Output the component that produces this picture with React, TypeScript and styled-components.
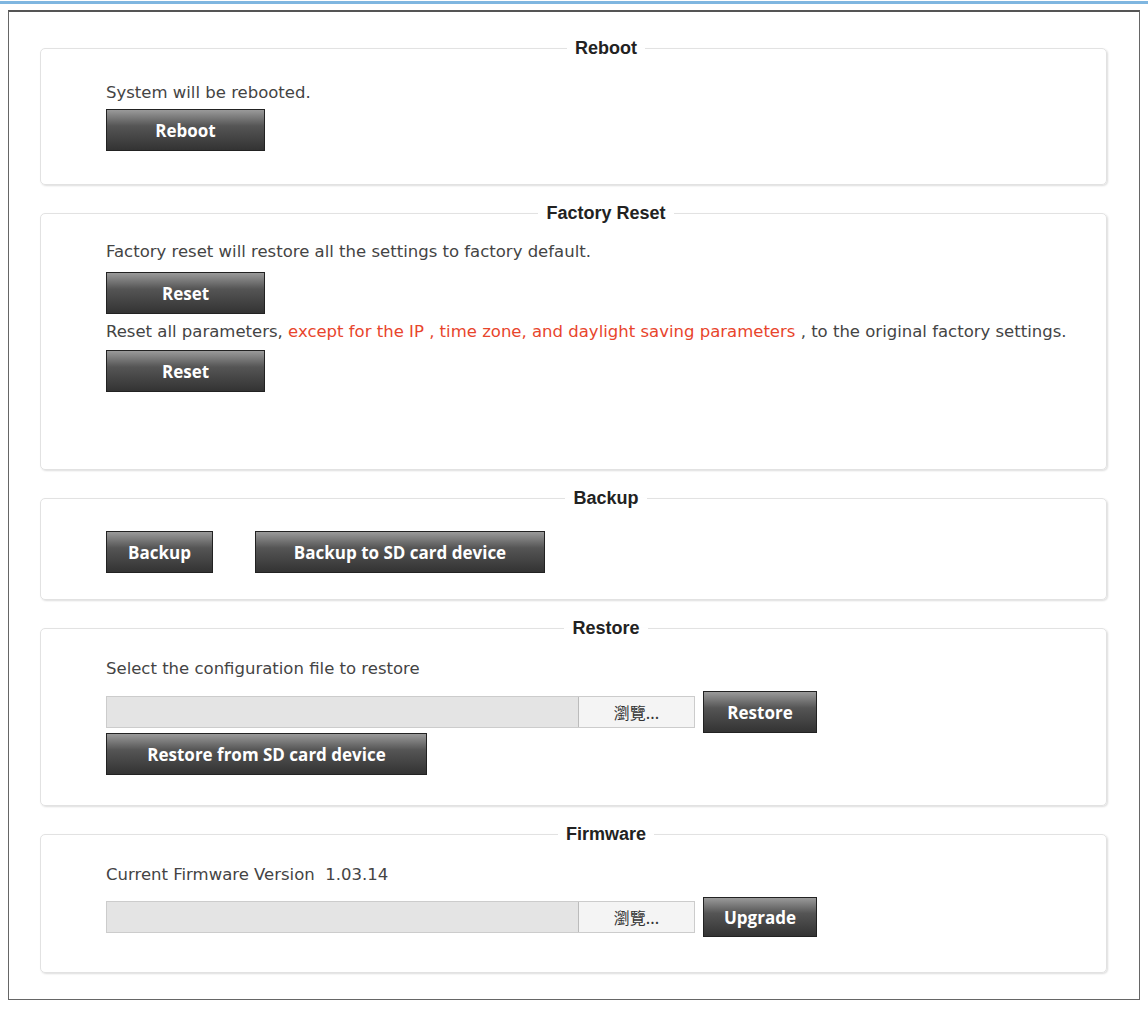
import React from 'react';
import styled, { createGlobalStyle } from 'styled-components';

const Global = createGlobalStyle`
  body { margin: 0; background: #fff; font-family: "Open Sans", "Noto Sans CJK TC", sans-serif; color: #333; }
`;

const TopLine = styled.div`
  height: 3px;
  margin-top: 1px;
  background: #7fb6e0;
`;

const Frame = styled.div`
  margin: 6px 8px 0 8px;
  height: 990px;
  box-sizing: border-box;
  border: 1px solid #666;
  border-top: 2px solid #555;
  padding: 26px 32px 0 31px;
  display: flex;
  flex-direction: column;
  gap: 18px;
`;

const Box = styled.fieldset<{ $h: number }>`
  margin: 0;
  height: ${p => p.$h}px;
  box-sizing: border-box;
  border: 1px solid #e2e2e2;
  border-radius: 5px;
  padding: 4px 0 0 65px;
  box-shadow: 1px 1px 2px #ddd;
`;

const Legend = styled.legend`
  margin: 0 auto;
  padding: 0 8px;
  font-weight: bold;
  font-size: 18px;
  color: #222;
  font-family: "Liberation Sans", sans-serif;
`;

const Text = styled.div`
  font-size: 16.5px;
  line-height: 24px;
  color: #444;
  font-family: "DejaVu Sans", sans-serif;
  padding-right: 10px;
`;

const Red = styled.span`
  color: #e8452c;
`;

const Btn = styled.button<{ $w: number }>`
  width: ${p => p.$w}px;
  height: 42px;
  border: 1px solid #222;
  background: linear-gradient(#9a9a9a, #555 40%, #333);
  color: #fff;
  font-family: "Open Sans", sans-serif;
  font-weight: bold;
  font-size: 17px;
  padding: 0;
  display: block;
`;

const Row = styled.div`
  display: flex;
  align-items: center;
  gap: 8px;
`;

const FileInput = styled.div`
  width: 589px;
  height: 32px;
  box-sizing: border-box;
  border: 1px solid #ccc;
  background: #e4e4e4;
  display: flex;
  justify-content: flex-end;
`;

const Browse = styled.div`
  width: 115px;
  border-left: 1px solid #bbb;
  background: #f4f4f4;
  font-size: 16px;
  font-family: "Noto Sans CJK TC", sans-serif;
  display: flex;
  align-items: center;
  justify-content: center;
  color: #333;
`;

export default function App() {
  return (
    <>
      <Global />
      <TopLine />
      <Frame>
        <Box $h={147}>
          <Legend>Reboot</Legend>
          <Text style={{ marginTop: 18 }}>System will be rebooted.</Text>
          <Btn $w={159} style={{ marginTop: 4 }}>Reboot</Btn>
        </Box>
        <Box $h={267}>
          <Legend>Factory Reset</Legend>
          <Text style={{ marginTop: 12 }}>Factory reset will restore all the settings to factory default.</Text>
          <Btn $w={159} style={{ marginTop: 8 }}>Reset</Btn>
          <Text style={{ marginTop: 6 }}>
            Reset all parameters, <Red>except for the IP , time zone, and daylight saving parameters</Red> , to the original factory settings.
          </Text>
          <Btn $w={159} style={{ marginTop: 6 }}>Reset</Btn>
        </Box>
        <Box $h={112}>
          <Legend>Backup</Legend>
          <Row style={{ gap: 42, marginTop: 18 }}>
            <Btn $w={107}>Backup</Btn>
            <Btn $w={290}>Backup to SD card device</Btn>
          </Row>
        </Box>
        <Box $h={188}>
          <Legend>Restore</Legend>
          <Text style={{ marginTop: 14 }}>Select the configuration file to restore</Text>
          <Row style={{ marginTop: 10 }}>
            <FileInput><Browse>瀏覽...</Browse></FileInput>
            <Btn $w={114}>Restore</Btn>
          </Row>
          <Btn $w={321}>Restore from SD card device</Btn>
        </Box>
        <Box $h={149}>
          <Legend>Firmware</Legend>
          <Text style={{ marginTop: 14 }}>Current Firmware Version&nbsp;&nbsp;1.03.14</Text>
          <Row style={{ marginTop: 10 }}>
            <FileInput><Browse>瀏覽...</Browse></FileInput>
            <Btn $w={114} style={{ height: 40 }}>Upgrade</Btn>
          </Row>
        </Box>
      </Frame>
    </>
  );
}
